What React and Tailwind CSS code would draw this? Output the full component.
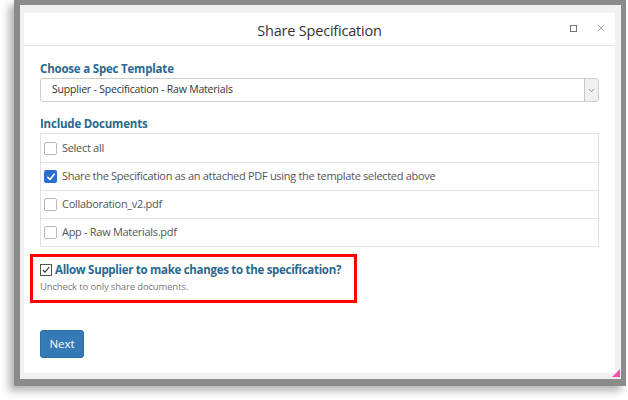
import { FiChevronDown, FiX } from "react-icons/fi";

const docs = [
  { label: "Select all", checked: false },
  { label: "Share the Specification as an attached PDF using the template selected above", checked: true },
  { label: "Collaboration_v2.pdf", checked: false },
  { label: "App - Raw Materials.pdf", checked: false },
];

function Box({ checked }) {
  if (checked) {
    return (
      <span className="flex h-[13px] w-[13px] shrink-0 items-center justify-center rounded-[2px] bg-[#2a6fd0]">
        <svg viewBox="0 0 12 12" className="h-[10px] w-[10px]">
          <path d="M2.2 6.4 L4.8 9 L9.8 2.6" fill="none" stroke="white" strokeWidth="1.9" strokeLinecap="round" strokeLinejoin="round" />
        </svg>
      </span>
    );
  }
  return <span className="h-[13px] w-[13px] shrink-0 rounded-[2px] border border-[#b9b9b9] bg-white" />;
}

export default function App() {
  return (
    <div className="h-[400px] w-[628px] overflow-hidden bg-white" style={{ fontFamily: '"Open Sans", "Noto Sans", sans-serif' }}>
      <div className="ml-[14px] h-[386px] w-[612px] bg-[#8b8b8b] pb-[7px] pl-[6px] pr-[5px] pt-[5px] shadow-[-5px_5px_8px_rgba(0,0,0,0.3)]">
        <div className="relative h-full w-full bg-[#f1f1f1] pb-[6px] pl-[4px] pr-[6px] pt-[8px]">
          <div className="flex h-full w-full flex-col bg-white">
            {/* header */}
            <div className="relative flex h-[33px] shrink-0 items-center justify-center border-b border-[#e6e6e6]">
              <span className="mt-[3px] text-[14.5px] tracking-[-0.2px] text-[#333]">Share Specification</span>
              <div className="absolute right-[8px] top-[9px] flex items-center gap-[18px]">
                <span className="h-[7px] w-[7px] border border-[#777]" />
                <FiX className="h-[12px] w-[12px] text-[#8a8a8a]" strokeWidth={1.4} />
              </div>
            </div>

            {/* body */}
            <div className="flex flex-col px-[16px] pt-[15px]">
              <div className="h-[16px] text-[11.5px] font-bold leading-[16px] tracking-[-0.2px] text-[#2b6790]">Choose a Spec Template</div>
              <div className="mt-[1px] flex h-[24px] items-center rounded-[3px] border border-[#cfcfcf] pl-[11px]">
                <span className="flex-1 text-[10.5px] tracking-[-0.2px] text-[#333]">Supplier - Specification - Raw Materials</span>
                <span className="flex h-[22px] w-[14px] items-center justify-center rounded-r-[2px] border-l border-[#c6c6c6] bg-[#f0f0f0]">
                  <FiChevronDown className="h-[9px] w-[9px] text-[#666]" />
                </span>
              </div>

              <div className="mt-[14px] h-[16px] text-[11.5px] font-bold leading-[16px] tracking-[-0.2px] text-[#2b6790]">Include Documents</div>
              <div className="mt-[1px] flex flex-col border border-[#e2e2e2]">
                {docs.map((d, i) => (
                  <div key={d.label} className={`flex h-[28px] items-center gap-[5px] pl-[3px] ${i > 0 ? "border-t border-[#e2e2e2]" : ""}`}>
                    <Box checked={d.checked} />
                    <span className="whitespace-nowrap text-[11px] tracking-[-0.3px] text-[#555]">{d.label}</span>
                  </div>
                ))}
              </div>

              <div className="-ml-[10px] mt-[7px] flex h-[49px] w-[327px] flex-col border-[3px] border-[#ff0000] pl-[7px] pt-[5px]">
                <div className="flex h-[16px] items-center gap-[3px]">
                  <span className="flex h-[12px] w-[12px] shrink-0 items-center justify-center border border-[#555] bg-white">
                    <svg viewBox="0 0 12 12" className="h-[10px] w-[10px]">
                      <path d="M2.2 6 L4.8 8.6 L9.8 2.6" fill="none" stroke="#333" strokeWidth="1.3" />
                    </svg>
                  </span>
                  <span className="whitespace-nowrap text-[11.5px] font-bold tracking-[-0.3px] text-[#2b6790]">Allow Supplier to make changes to the specification?</span>
                </div>
                <div className="mt-[2px] whitespace-nowrap text-[9.5px] tracking-[-0.15px] text-[#777]">Uncheck to only share documents.</div>
              </div>

              <button type="button" className="mt-[27px] flex h-[28px] w-[44px] items-center justify-center rounded-[3px] border border-[#2e6da4] bg-[#337ab7] text-[11.5px] text-white">
                Next
              </button>
            </div>
          </div>
          <svg viewBox="0 0 8 8" className="absolute bottom-[2px] right-[1px] h-[8px] w-[8px]">
            <path d="M8 0 L8 8 L0 8 Z" fill="#ff4fa3" />
          </svg>
        </div>
      </div>
    </div>
  );
}
